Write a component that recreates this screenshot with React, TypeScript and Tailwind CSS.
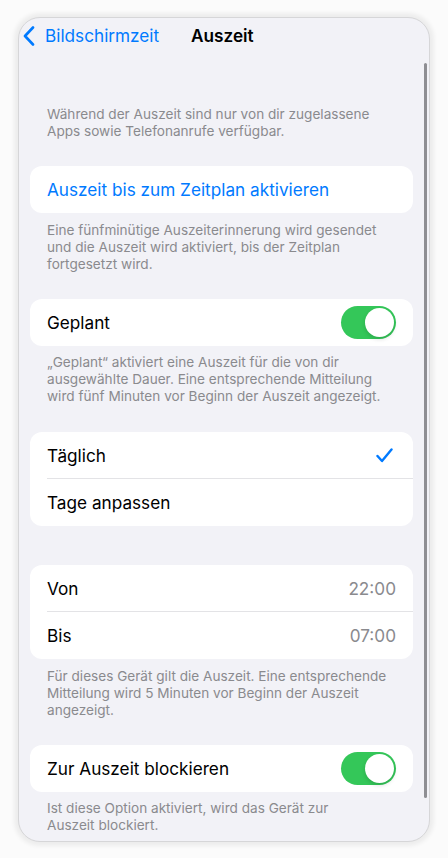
import React from "react";

const font = { fontFamily: "Inter, 'Noto Sans', sans-serif" };

function Toggle() {
  return (
    <div className="w-[55px] h-[33px] rounded-full bg-[#34c759] relative shrink-0">
      <div className="absolute right-[2px] top-[2px] w-[29px] h-[29px] rounded-full bg-white shadow-[0_2px_4px_rgba(0,0,0,0.15)]" />
    </div>
  );
}

function Footer({ children, className = "" }: { children: React.ReactNode; className?: string }) {
  return (
    <p className={"px-[17px] text-[13.6px] leading-[17px] text-[#8a8a8e] " + className}>{children}</p>
  );
}

function Row({ children, divider = false }: { children: React.ReactNode; divider?: boolean }) {
  return (
    <div className="relative h-[47px] flex items-center justify-between pl-[17px] pr-[17px] text-[17.2px]">
      {children}
      {divider && <div className="absolute left-[17px] right-0 bottom-0 h-px bg-[#e3e3e6]" />}
    </div>
  );
}

export default function App() {
  return (
    <div className="w-[448px] h-[858px] bg-[#fbfbfb] pt-[17px] pl-[18px]" style={font}>
      <div className="relative w-[412px] h-[825px] rounded-[22px] bg-[#f2f2f7] overflow-hidden border border-[#d6d6d8] shadow-[0_0_4px_4px_rgba(0,0,0,0.06)]">
        {/* nav */}
        <div className="h-[36px] flex items-center relative">
          <div className="flex items-center pl-[3px] text-[#007aff]">
            <svg width="12" height="20" viewBox="0 0 12 20" className="ml-[1px]">
              <path d="M10 1.5 L2 10 L10 18.5" fill="none" stroke="#007aff" strokeWidth="2.6" strokeLinecap="round" strokeLinejoin="round" />
            </svg>
            <span className="ml-[10px] text-[17.2px] leading-[22px]">Bildschirmzeit</span>
          </div>
          <span className="absolute left-[172px] text-[17.2px] leading-[22px] font-semibold text-black">Auszeit</span>
        </div>

        {/* scrollbar */}
        <div className="absolute right-[2px] top-[45px] w-[3px] h-[735px] bg-[#8e8e93] rounded-full" />

        <div className="pr-[16px] pl-[11px]">
          <Footer className="mt-[52px]">
            Während der Auszeit sind nur von dir zugelassene Apps sowie Telefonanrufe verfügbar.
          </Footer>

          <div className="mt-[26px] bg-white rounded-[12px]">
            <Row>
              <span className="text-[#007aff]">Auszeit bis zum Zeitplan aktivieren</span>
            </Row>
          </div>
          <Footer className="mt-[9px]">
            Eine fünfminütige Auszeiterinnerung wird gesendet und die Auszeit wird aktiviert, bis der Zeitplan fortgesetzt wird.
          </Footer>

          <div className="mt-[26px] bg-white rounded-[12px]">
            <Row>
              <span className="text-black">Geplant</span>
              <Toggle />
            </Row>
          </div>
          <Footer className="mt-[8px]">
            „Geplant“ aktiviert eine Auszeit für die von dir ausgewählte Dauer. Eine entsprechende Mitteilung wird fünf Minuten vor Beginn der Auszeit angezeigt.
          </Footer>

          <div className="mt-[27px] bg-white rounded-[12px]">
            <Row divider>
              <span className="text-black">Täglich</span>
              <svg width="17" height="15" viewBox="0 0 17 15" className="mr-[3px]">
                <path d="M1.5 8 L6 13 L15.5 1.5" fill="none" stroke="#007aff" strokeWidth="2.4" strokeLinecap="round" strokeLinejoin="round" />
              </svg>
            </Row>
            <Row>
              <span className="text-black">Tage anpassen</span>
            </Row>
          </div>

          <div className="mt-[39px] bg-white rounded-[12px]">
            <Row divider>
              <span className="text-black">Von</span>
              <span className="text-[#8a8a8e]">22:00</span>
            </Row>
            <Row>
              <span className="text-black">Bis</span>
              <span className="text-[#8a8a8e]">07:00</span>
            </Row>
          </div>
          <Footer className="mt-[9px]">
            Für dieses Gerät gilt die Auszeit. Eine entsprechende Mitteilung wird 5 Minuten vor Beginn der Auszeit angezeigt.
          </Footer>

          <div className="mt-[26px] bg-white rounded-[12px]">
            <Row>
              <span className="text-black">Zur Auszeit blockieren</span>
              <Toggle />
            </Row>
          </div>
          <Footer className="mt-[8px]">
            Ist diese Option aktiviert, wird das Gerät zur
            <br />
            Auszeit blockiert.
          </Footer>
        </div>
      </div>
    </div>
  );
}
